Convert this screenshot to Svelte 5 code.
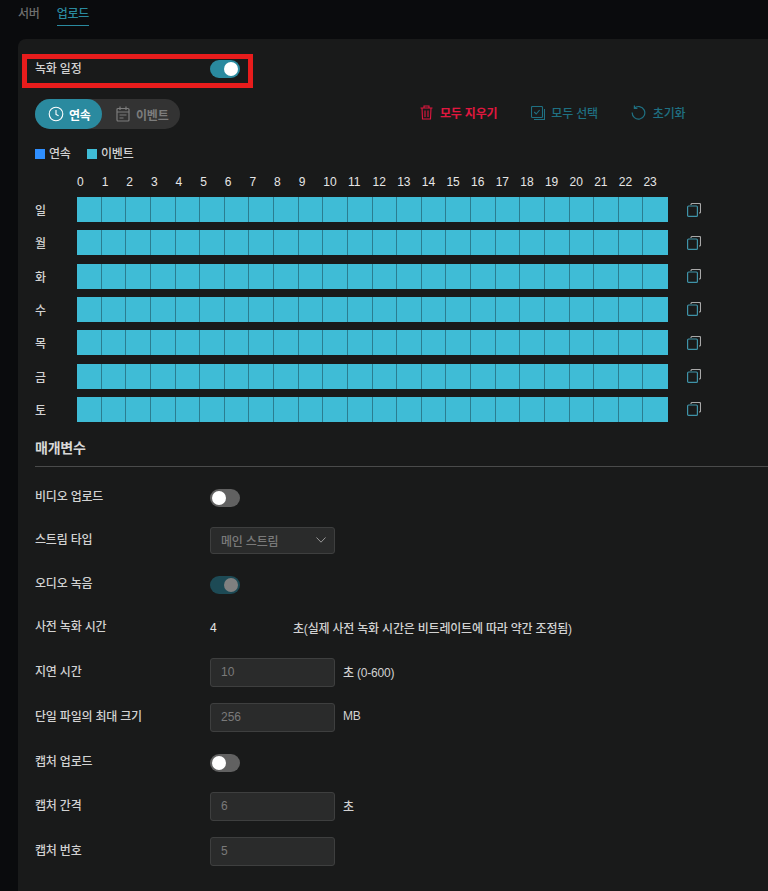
<script>
  const hours = Array.from({ length: 24 }, (_, i) => i);
  const days = ['일', '월', '화', '수', '목', '금', '토'];
</script>

<div class="page">
  <nav class="tabs">
    <span class="tab">서버</span>
    <span class="tab active">업로드</span>
  </nav>

  <main class="card">
    <div class="marker"></div>

    <div class="head-row">
      <span class="label">녹화 일정</span>
      <span class="toggle on"><i></i></span>
    </div>

    <div class="tools">
      <div class="mode">
        <span class="mode-item selected">
          <svg width="16" height="16" viewBox="0 0 16 16" fill="none" stroke="currentColor" stroke-width="1.1">
            <circle cx="8" cy="8" r="6.8" />
            <path d="M8 4v4.4l2.6 1.4" />
          </svg>
          연속
        </span>
        <span class="mode-item">
          <svg width="14" height="16" viewBox="0 0 14 16" fill="none" stroke="currentColor" stroke-width="1.2">
            <rect x="1" y="2.5" width="12" height="12.5" rx="1" />
            <path d="M4 0.5v3.5M10 0.5v3.5M1 6h12M3.5 9h7M3.5 12h4" />
          </svg>
          이벤트
        </span>
      </div>
      <div class="actions">
        <span class="action clear">
          <svg width="13" height="15" viewBox="0 0 13 15" fill="none" stroke="currentColor" stroke-width="1.1">
            <path d="M0.5 3h12M4 3V1h5v2M2 3l.5 11h8L11 3M5 5.5v6.5M8 5.5v6.5" />
          </svg>
          모두 지우기
        </span>
        <span class="action select-all">
          <svg width="14" height="14" viewBox="0 0 14 14" fill="none" stroke="currentColor" stroke-width="1.1">
            <rect x="0.5" y="0.5" width="11" height="11" rx="1" />
            <path d="M3.2 6l2 2 3.4-4M13.5 3v10.5H3" />
          </svg>
          모두 선택
        </span>
        <span class="action reset">
          <svg width="15" height="15" viewBox="0 0 15 15" fill="none" stroke="currentColor" stroke-width="1.2">
            <path d="M3.2 3.2A6.3 6.3 0 1 1 1.2 7.5" />
            <path d="M3.4 0.4v3h3" />
          </svg>
          초기화
        </span>
      </div>
    </div>

    <div class="legend">
      <span class="swatch blue"></span>
      <span class="legend-text">연속</span>
      <span class="swatch cyan"></span>
      <span class="legend-text">이벤트</span>
    </div>

    <div class="hours">
      {#each hours as h}
        <span>{h}</span>
      {/each}
    </div>

    <div class="schedule">
      {#each days as day}
        <div class="day">
          <span class="day-name">{day}</span>
          <div class="cells">
            {#each hours as h}
              <span class="cell"></span>
            {/each}
          </div>
          <svg class="copy" width="14" height="14" viewBox="0 0 14 14" fill="none">
            <path d="M4 2V1.5a1 1 0 0 1 1-1h7.5a1 1 0 0 1 1 1V9a1 1 0 0 1-1 1H12" stroke="#a9a9a9" stroke-width="1.1" />
            <rect x="0.6" y="3" width="9.8" height="10.4" rx="1" stroke="#3f93a8" stroke-width="1.2" />
          </svg>
        </div>
      {/each}
    </div>

    <h2 class="section">매개변수</h2>

    <div class="params">
      <div class="row tall">
        <span class="label">비디오 업로드</span>
        <span class="toggle off"><i></i></span>
      </div>
      <div class="row">
        <span class="label">스트림 타입</span>
        <div class="select">
          메인 스트림
          <svg width="10" height="6" viewBox="0 0 10 6" fill="none" stroke="#9a9a9a" stroke-width="1">
            <path d="M0.5 0.5L5 5.2 9.5 0.5" />
          </svg>
        </div>
      </div>
      <div class="row tall">
        <span class="label">오디오 녹음</span>
        <span class="toggle dim"><i></i></span>
      </div>
      <div class="row text-row">
        <span class="label">사전 녹화 시간</span>
        <span class="value">4</span>
        <span class="note">초(실제 사전 녹화 시간은 비트레이트에 따라 약간 조정됨)</span>
      </div>
      <div class="row">
        <span class="label">지연 시간</span>
        <input class="field" value="10" disabled />
        <span class="unit">초 (0-600)</span>
      </div>
      <div class="row">
        <span class="label">단일 파일의 최대 크기</span>
        <input class="field" value="256" disabled />
        <span class="unit">MB</span>
      </div>
      <div class="row tall">
        <span class="label">캡처 업로드</span>
        <span class="toggle off"><i></i></span>
      </div>
      <div class="row">
        <span class="label">캡처 간격</span>
        <input class="field" value="6" disabled />
        <span class="unit">초</span>
      </div>
      <div class="row">
        <span class="label">캡처 번호</span>
        <input class="field" value="5" disabled />
      </div>
    </div>
  </main>
</div>

<style>
  :global(body) {
    margin: 0;
    background: #0a0b0d;
    font-family: "Liberation Sans", "Noto Sans CJK KR", sans-serif;
    font-size: 12px;
    font-weight: 500;
    letter-spacing: -0.2px;
    color: #d4d4d4;
    overflow: hidden;
  }

  .page {
    height: 891px;
    padding-left: 18px;
    overflow: hidden;
  }

  .tabs {
    display: flex;
    gap: 17px;
    height: 39px;
    box-sizing: border-box;
    padding-top: 6px;
  }

  .tab {
    height: 19px;
    line-height: 17px;
    font-size: 12px;
    color: #6f6f6f;
  }

  .tab.active {
    color: #2a8a9f;
    border-bottom: 1px solid #2a8a9f;
  }

  .card {
    position: relative;
    height: 852px;
    box-sizing: border-box;
    padding: 21px 0 0 17px;
    background: #191a1a;
    border-radius: 8px 0 0 0;
  }

  .marker {
    position: absolute;
    left: 4px;
    top: 15px;
    width: 231px;
    height: 34px;
    box-sizing: border-box;
    border: 5px solid #e81c1c;
  }

  .head-row {
    display: flex;
    align-items: center;
    height: 18px;
  }

  .label {
    width: 175px;
    flex: none;
    margin-top: -1px;
    font-size: 12px;
    line-height: 16px;
    color: #d2d2d2;
  }

  .toggle {
    position: relative;
    display: block;
    width: 30px;
    height: 18px;
    border-radius: 9px;
  }

  .toggle i {
    position: absolute;
    top: 2px;
    width: 14px;
    height: 14px;
    border-radius: 50%;
    background: #fff;
  }

  .toggle.on {
    background: #2a8a9f;
  }

  .toggle.on i {
    right: 2px;
  }

  .toggle.off {
    background: #616161;
  }

  .toggle.off i {
    left: 2px;
  }

  .toggle.dim {
    background: #1d4a55;
  }

  .toggle.dim i {
    right: 2px;
    background: #808080;
  }

  .tools {
    display: flex;
    align-items: center;
    margin-top: 21px;
  }

  .mode {
    display: flex;
    width: 145px;
    height: 30px;
    border-radius: 15px;
    background: #333333;
  }

  .mode-item {
    display: flex;
    align-items: center;
    gap: 6px;
    padding: 0 0 0 14px;
    color: #7c7c7c;
    font-weight: 700;
    border-radius: 15px;
    white-space: nowrap;
  }

  .mode-item svg {
    flex: none;
  }

  .mode-item.selected {
    width: 67px;
    box-sizing: border-box;
    padding: 0 0 0 13px;
    gap: 5px;
    color: #fff;
    background: #2a8a9f;
  }

  .actions {
    display: flex;
    align-items: center;
    margin-top: -3px;
    margin-left: 240px;
  }

  .action {
    display: flex;
    align-items: center;
    gap: 7px;
    margin-right: 34px;
    font-size: 12px;
    white-space: nowrap;
  }

  .clear {
    color: #e0173f;
    font-weight: 700;
  }

  .select-all,
  .reset {
    color: #1f7082;
  }

  .select-all {
    margin-right: 33px;
    gap: 6px;
  }

  .legend {
    display: flex;
    align-items: center;
    height: 14px;
    margin-top: 18px;
    line-height: 14px;
  }

  .swatch {
    width: 10px;
    height: 10px;
    margin-right: 4px;
  }

  .blue {
    background: #2f8fff;
  }

  .cyan {
    background: #3fbcd6;
  }

  .legend-text {
    width: 38px;
    color: #d2d2d2;
  }

  .hours {
    display: grid;
    grid-template-columns: repeat(24, 1fr);
    width: 591px;
    height: 14px;
    margin: 14px 0 8px 42px;
    line-height: 14px;
    letter-spacing: 0;
    color: #e6e6e6;
  }

  .schedule {
    display: grid;
    row-gap: 8.33px;
  }

  .day {
    display: flex;
    align-items: center;
    height: 25px;
  }

  .day-name {
    width: 42px;
    flex: none;
    color: #d2d2d2;
  }

  .cells {
    display: grid;
    grid-template-columns: repeat(24, 1fr);
    width: 591px;
    height: 100%;
    flex: none;
  }

  .cell {
    background: #3fbcd6;
    border-right: 1px solid #2b7d90;
  }

  .cell:last-child {
    border-right: none;
  }

  .copy {
    flex: none;
    margin-left: 19px;
  }

  .section {
    margin: 16px 0 0;
    padding-bottom: 8px;
    font-size: 14px;
    line-height: 20px;
    font-weight: 700;
    color: #d8d8d8;
    border-bottom: 1px solid #4a4b4b;
  }

  .params {
    display: flex;
    flex-direction: column;
    gap: 16px;
    margin-top: 16px;
  }

  .row {
    display: flex;
    align-items: center;
  }

  .row.tall {
    padding: 6px 0 4px;
  }

  .text-row {
    height: 28px;
  }

  .value {
    width: 83px;
    color: #e6e6e6;
  }

  .note {
    margin-top: -1px;
    color: #d2d2d2;
  }

  .select {
    display: flex;
    align-items: center;
    justify-content: space-between;
    width: 125px;
    height: 27px;
    box-sizing: border-box;
    padding: 0 8px 0 10px;
    background: #2a2b2b;
    border: 1px solid #3e3f3f;
    border-radius: 3px;
    color: #7a7a7a;
  }

  .field {
    display: block;
    width: 125px;
    height: 29px;
    box-sizing: border-box;
    padding: 0 10px;
    background: #2a2b2b;
    border: 1px solid #3e3f3f;
    border-radius: 3px;
    font: inherit;
    letter-spacing: 0;
    color: #7a7a7a;
    -webkit-text-fill-color: #7a7a7a;
    opacity: 1;
  }

  .unit {
    margin: -2px 0 0 8px;
    color: #d2d2d2;
  }
</style>
